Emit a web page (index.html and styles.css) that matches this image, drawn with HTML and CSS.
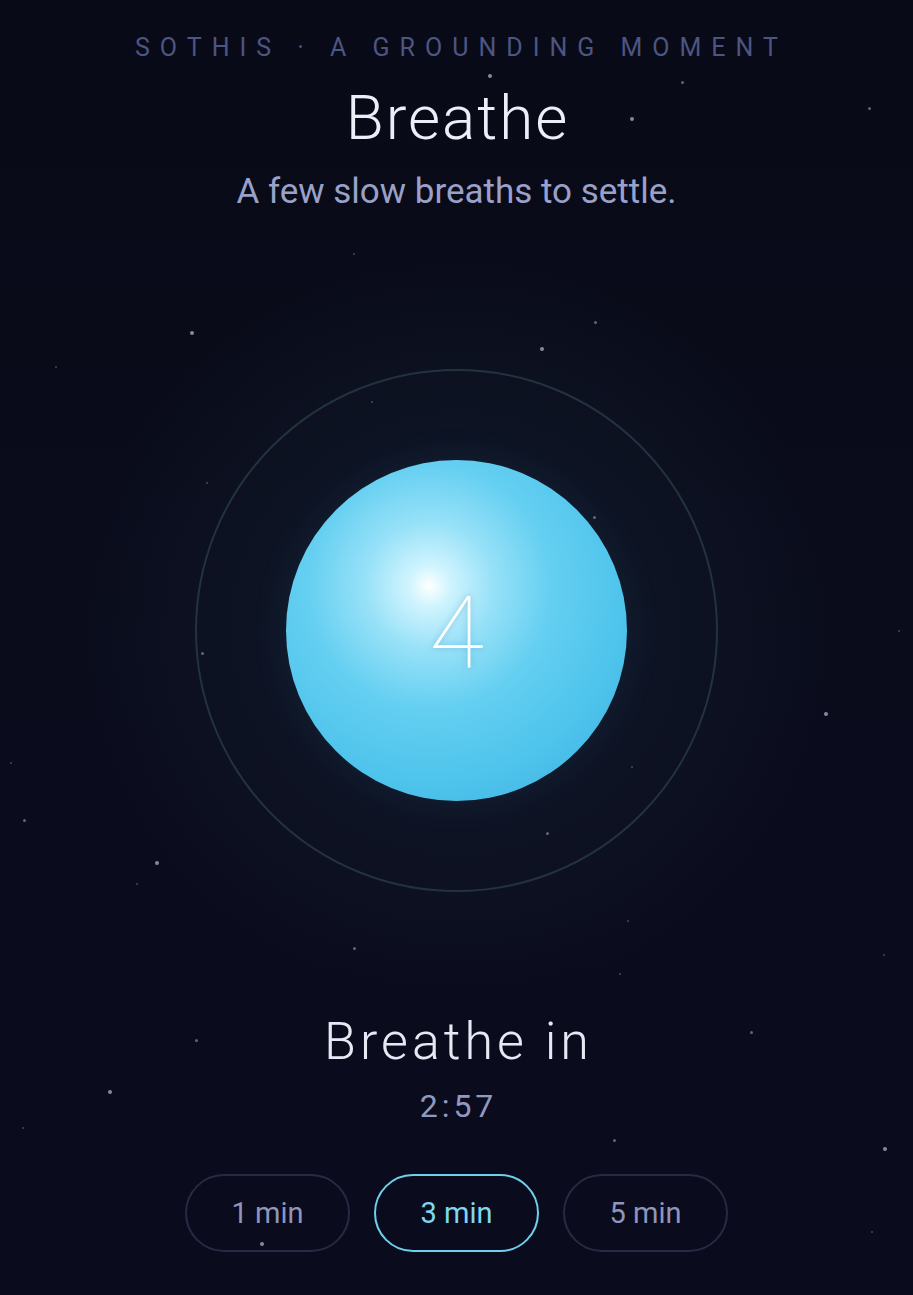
FILE: index.html
```html
<!DOCTYPE html>
<html lang="en">
<head>
<meta charset="utf-8">
<title>Sothis · Breathe</title>
<link rel="stylesheet" href="styles.css">
</head>
<body>
<div class="screen">
  <div class="stars" aria-hidden="true">
    <i class="star" style="left:488px;top:74px"></i>
    <i class="star" style="left:630px;top:117px"></i>
    <i class="star dim" style="left:868px;top:107px"></i>
    <i class="star dim" style="left:681px;top:81px"></i>
    <i class="star" style="left:190px;top:331px"></i>
    <i class="star dim" style="left:594px;top:321px"></i>
    <i class="star" style="left:540px;top:347px"></i>
    <i class="star faint" style="left:371px;top:401px"></i>
    <i class="star faint" style="left:353px;top:253px"></i>
    <i class="star faint" style="left:55px;top:366px"></i>
    <i class="star faint" style="left:206px;top:482px"></i>
    <i class="star dim" style="left:593px;top:516px"></i>
    <i class="star dim" style="left:201px;top:652px"></i>
    <i class="star" style="left:824px;top:712px"></i>
    <i class="star faint" style="left:898px;top:630px"></i>
    <i class="star faint" style="left:10px;top:762px"></i>
    <i class="star dim" style="left:23px;top:819px"></i>
    <i class="star dim" style="left:546px;top:832px"></i>
    <i class="star" style="left:155px;top:861px"></i>
    <i class="star faint" style="left:136px;top:883px"></i>
    <i class="star faint" style="left:631px;top:766px"></i>
    <i class="star dim" style="left:353px;top:947px"></i>
    <i class="star faint" style="left:883px;top:954px"></i>
    <i class="star faint" style="left:627px;top:920px"></i>
    <i class="star faint" style="left:619px;top:973px"></i>
    <i class="star dim" style="left:750px;top:1031px"></i>
    <i class="star dim" style="left:195px;top:1039px"></i>
    <i class="star" style="left:108px;top:1090px"></i>
    <i class="star faint" style="left:22px;top:1127px"></i>
    <i class="star dim" style="left:613px;top:1139px"></i>
    <i class="star" style="left:883px;top:1147px"></i>
    <i class="star" style="left:260px;top:1242px"></i>
    <i class="star faint" style="left:871px;top:1231px"></i>
  </div>

  <header class="head">
    <p class="eyebrow">SOTHIS · A GROUNDING MOMENT</p>
    <h1 class="title">Breathe</h1>
    <p class="subtitle">A few slow breaths to settle.</p>
  </header>

  <section class="stage">
    <div class="ring">
      <div class="orb"><span class="count">4</span></div>
    </div>
  </section>

  <p class="phase">Breathe in</p>
  <p class="timer">2:57</p>

  <nav class="durations">
    <button class="pill">1 min</button>
    <button class="pill active">3 min</button>
    <button class="pill">5 min</button>
  </nav>
</div>
</body>
</html>
```

FILE: styles.css
```css
* { box-sizing: border-box; }

html, body {
  margin: 0;
  padding: 0;
  background: #0a0b1a;
}

body {
  font-family: Roboto, "Noto Sans", "Liberation Sans", sans-serif;
  color: #e6e8f4;
}

.screen {
  position: relative;
  width: 913px;
  height: 1295px;
  overflow: hidden;
  display: flex;
  flex-direction: column;
  align-items: center;
  padding-top: 33px;
  background:
    radial-gradient(circle at 457px 630px, rgba(22, 34, 52, 0.75) 0px, rgba(16, 24, 40, 0.45) 250px, rgba(10, 11, 26, 0) 380px),
    linear-gradient(180deg, #090a17 0%, #0a0c1c 50%, #0a0b1c 100%);
}

.stars {
  position: absolute;
  inset: 0;
  pointer-events: none;
}

.star {
  position: absolute;
  width: 4px;
  height: 4px;
  border-radius: 50%;
  background: #9aa0b8;
  opacity: 0.85;
}
.star.dim { width: 3px; height: 3px; opacity: 0.6; }
.star.faint { width: 2px; height: 2px; opacity: 0.4; }

.head {
  display: flex;
  flex-direction: column;
  align-items: center;
  position: relative;
}

.eyebrow {
  margin: 0;
  font-size: 25px;
  line-height: 30px;
  letter-spacing: 10px;
  margin-right: -10px;
  color: #4d5583;
  font-weight: 400;
}

.title {
  margin: 19px 0 0;
  font-size: 62px;
  line-height: 72px;
  font-weight: 300;
  color: #eceef8;
  letter-spacing: 2px;
  margin-right: -2px;
}

.subtitle {
  margin: 17px 0 0;
  font-size: 35px;
  line-height: 42px;
  color: #9aa1c9;
  font-weight: 400;
}

.stage {
  position: relative;
  margin-top: 67px;
  width: 700px;
  height: 700px;
  display: flex;
  align-items: center;
  justify-content: center;
}

.ring {
  width: 523px;
  height: 523px;
  border-radius: 50%;
  border: 2px solid #23323f;
  display: flex;
  align-items: center;
  justify-content: center;
}

.orb {
  width: 341px;
  height: 341px;
  border-radius: 50%;
  background: radial-gradient(circle at 42% 37%, #ffffff 0%, #d0f4fe 7%, #97e1f8 22%, #64cff1 42%, #4fc4ec 66%, #44b8e5 84%, #3096ca 100%);
  display: flex;
  align-items: center;
  justify-content: center;
  box-shadow: 0 0 40px rgba(70, 180, 230, 0.08);
}

.count {
  font-family: Roboto, sans-serif;
  font-weight: 100;
  font-size: 100px;
  line-height: 1;
  color: #ffffff;
  margin-top: 6px;
  text-shadow: 0 0 6px rgba(40, 120, 170, 0.35);
}

.phase {
  margin: 32px 0 0;
  font-size: 52px;
  line-height: 60px;
  font-weight: 300;
  letter-spacing: 4px;
  margin-right: -4px;
  color: #e6e8f4;
  position: relative;
}

.timer {
  margin: 15px 0 0;
  font-size: 32px;
  line-height: 38px;
  letter-spacing: 4px;
  margin-right: -4px;
  color: #9298c0;
  position: relative;
}

.durations {
  margin-top: 49px;
  display: flex;
  gap: 24px;
  position: relative;
}

.pill {
  width: 165px;
  height: 78px;
  border-radius: 39px;
  border: 2px solid #262b44;
  background: transparent;
  color: #8f95bb;
  font-family: Roboto, "Noto Sans", sans-serif;
  font-size: 29px;
  font-weight: 400;
  padding: 0;
}

.pill.active {
  border-color: #6fd0ec;
  color: #7fd6f0;
}
```
